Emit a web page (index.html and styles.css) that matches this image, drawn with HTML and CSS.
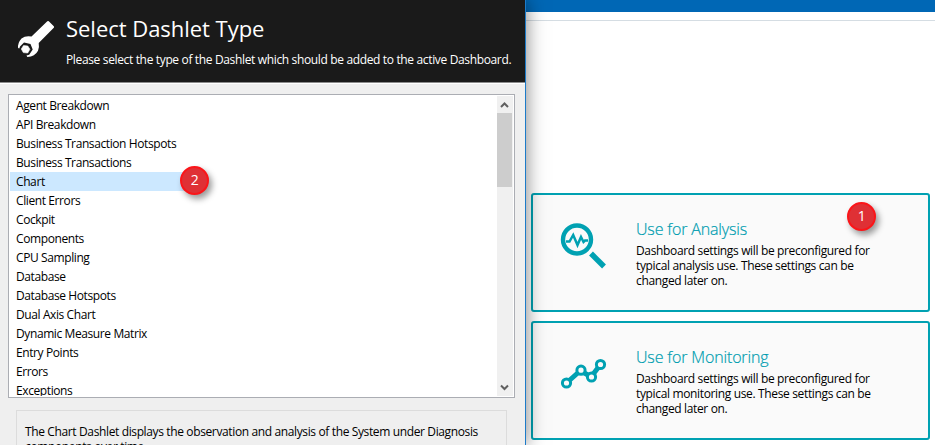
FILE: index.html
```html
<!DOCTYPE html>
<html lang="en">
<head>
<meta charset="utf-8">
<title>Select Dashlet Type</title>
<link rel="stylesheet" href="styles.css">
</head>
<body>
<div class="screen">
  <section class="dialog">
    <header class="dialog-header">
      <svg class="wrench" width="38" height="38" viewBox="0 0 38 38">
        <path d="M30.300 1.300Q31 .7 31.800 1.300L36.800 6.300Q37.500 7 36.800 7.800L21.700 23Q22.500 27 21 30.700Q18 36.500 10.300 36.900L9.500 35.500L12.200 34.800L15.700 29.500L13.500 24L7 22.600L3 26.500L2.300 28.500L1.100 28Q.5 23 4.500 18.500Q8.500 15.300 14.500 16.500Z" fill="#fff"/>
        <path d="M4.300 29L6.500 25.600L10.800 26L12.900 29.300L10.700 33L6.300 32.600Z" fill="#fff" stroke="#fff" stroke-width=".6"/>
      </svg>
      <div class="heading">
        <h1>Select Dashlet Type</h1>
        <p>Please select the type of the Dashlet which should be added to the active Dashboard.</p>
      </div>
    </header>
    <div class="listbox">
      <ul class="items">
        <li>Agent Breakdown</li>
        <li>API Breakdown</li>
        <li>Business Transaction Hotspots</li>
        <li>Business Transactions</li>
        <li class="selected">Chart<span class="badge badge-two">2</span></li>
        <li>Client Errors</li>
        <li>Cockpit</li>
        <li>Components</li>
        <li>CPU Sampling</li>
        <li>Database</li>
        <li>Database Hotspots</li>
        <li>Dual Axis Chart</li>
        <li>Dynamic Measure Matrix</li>
        <li>Entry Points</li>
        <li>Errors</li>
        <li>Exceptions</li>
      </ul>
      <div class="scrollbar">
        <svg class="arrow" width="15" height="17" viewBox="0 0 15 17"><path d="M4 11L7.500 7.500L11 11" fill="none" stroke="#606060" stroke-width="2"/></svg>
        <div class="thumb"></div>
        <svg class="arrow" width="15" height="17" viewBox="0 0 15 17"><path d="M4 6.500L7.500 10L11 6.500" fill="none" stroke="#606060" stroke-width="2"/></svg>
      </div>
    </div>
    <div class="description">The Chart Dashlet displays the observation and analysis of the System under Diagnosis<br>components over time.</div>
  </section>
  <main class="workspace">
    <div class="titlebar"></div>
    <div class="toolbar"></div>
    <div class="cards">
      <article class="card">
        <svg class="card-icon" width="48" height="48" viewBox="0 0 48 48" fill="none" stroke="#00a1b2">
          <circle cx="17" cy="17.500" r="14" stroke-width="4.400"/>
          <path d="M6 19.500H9.500L13.200 13L17.500 23L21 15L23.500 20L25 18.500H28" stroke-width="2.500"/>
          <path d="M31 31.500L44 44.500" stroke-width="5.500"/>
        </svg>
        <div class="card-text">
          <h2>Use for Analysis</h2>
          <p>Dashboard settings will be preconfigured for<br>typical analysis use. These settings can be<br>changed later on.</p>
        </div>
        <span class="badge badge-one">1</span>
      </article>
      <article class="card">
        <svg class="card-icon" width="48" height="48" viewBox="0 0 48 48" stroke="#00a1b2">
          <path d="M6.500 37L20.500 24.500L31 31L40.500 18.500" fill="none" stroke-width="5"/>
          <g fill="#fafafa" stroke-width="3"><circle cx="6.500" cy="37" r="4.100"/><circle cx="21" cy="24.200" r="4.100"/><circle cx="31.500" cy="31" r="4.100"/><circle cx="40.500" cy="18.500" r="4.100"/></g>
        </svg>
        <div class="card-text">
          <h2>Use for Monitoring</h2>
          <p>Dashboard settings will be preconfigured for<br>typical monitoring use. These settings can be<br>changed later on.</p>
        </div>
      </article>
    </div>
  </main>
</div>
</body>
</html>
```

FILE: styles.css
```css
* { box-sizing: border-box; }
body { margin: 0; background: #fff; color: #000; font: 12px/15px "Open Sans", "Noto Sans", sans-serif; letter-spacing: -0.35px; }
h1, h2, p, ul { margin: 0; padding: 0; font-weight: 400; }
.screen { display: flex; width: 935px; height: 445px; overflow: hidden; }
.dialog { position: relative; z-index: 1; width: 526px; height: 445px; flex: none; background: #efefef; border-right: 1px solid #1c7bc9; box-shadow: 0 0 18px rgba(0,0,0,.5); }
.dialog-header { display: flex; height: 84px; padding: 20px 0 0 17px; background: #1a1a1a; color: #fff; border-bottom: 1px solid #fff; box-shadow: inset 0 -1px #8c8c8c; }
.wrench { flex: none; }
.heading { padding: 0 0 0 11px; margin-top: -7px; }
h1 { font-size: 22px; line-height: 30px; letter-spacing: -0.03px; white-space: nowrap; }
.heading p { margin-top: 9px; white-space: nowrap; }
.listbox { display: flex; justify-content: space-between; width: 507px; height: 304px; margin: 10px 0 0 8px; padding: 1px; background: #fff; border: 1px solid #abadb3; }
.items { list-style: none; height: 300px; overflow: hidden; width: 487px; letter-spacing: -0.4px; }
.items li { height: 19px; line-height: 19px; padding-left: 6px; white-space: nowrap; }
.items .selected { position: relative; width: 184px; background: #cce8ff; }
.scrollbar { display: flex; flex-direction: column; width: 16px; height: 300px; background: #f0f0f0; }
.arrow { flex: none; }
.thumb { width: 15px; height: 74px; margin-bottom: 192px; background: #cdcdcd; }
.description { width: 491px; height: 60px; margin: 12px 0 0 16px; padding: 13px 8px; border: 1px solid #dcdcdc; white-space: nowrap; letter-spacing: -0.37px; }
.workspace { flex: 1; }
.titlebar { height: 12px; background: #0067b5; }
.toolbar { height: 9px; border-bottom: 1px solid #d5dde3; }
.cards { display: flex; flex-direction: column; gap: 9px; margin: 172px 5px 0; }
.card { position: relative; display: flex; width: 399px; height: 119px; padding: 24px 0 0 27px; background: #fafafa; border: 2px solid #00a1b2; border-radius: 3px; }
.card-icon { flex: none; margin-top: 3px; }
.card:last-child .card-icon { margin-top: -1px; }
.card-text { margin-left: 28px; white-space: nowrap; }
h2 { color: #009db0; font-size: 16px; line-height: 20px; margin-bottom: 4px; letter-spacing: -0.15px; font-weight: 300; -webkit-text-stroke: 0.2px #009db0; }
.badge { position: absolute; width: 29px; height: 29px; border: 2px solid #fb1519; border-radius: 50%; background: #df3035; color: #fff; font-size: 14px; line-height: 24px; text-align: center; box-shadow: 3px 4px 6px rgba(0,0,0,.4); }
.badge-two { left: 170px; top: -6px; }
.badge-one { left: 314px; top: 7px; }
```
